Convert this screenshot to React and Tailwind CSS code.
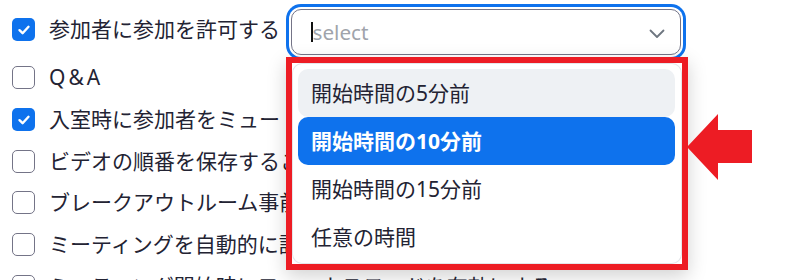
import React from "react";

const rows = [
  { label: "Q&A", checked: false, latin: true },
  { label: "入室時に参加者をミュートする", checked: true },
  { label: "ビデオの順番を保存することを許可する", checked: false },
  { label: "ブレークアウトルーム事前割り当て", checked: false },
  { label: "ミーティングを自動的に記録する", checked: false },
  { label: "ミーティング開始時にフォーカスモードを有効にする", checked: false },
];

function Box({ checked }) {
  if (checked) {
    return (
      <span className="flex h-[23px] w-[23px] shrink-0 items-center justify-center rounded-[5px] bg-[#0e72ed]">
        <svg width="14" height="14" viewBox="0 0 14 14" fill="none">
          <path d="M2.5 7.2 L5.6 10.2 L11.5 3.8" stroke="white" strokeWidth="2.4" strokeLinecap="round" strokeLinejoin="round" />
        </svg>
      </span>
    );
  }
  return <span className="h-[23px] w-[23px] shrink-0 rounded-[5px] border-[1.5px] border-[#747487] bg-white" />;
}

export default function App() {
  return (
    <div className="relative h-[280px] w-[787px] overflow-hidden bg-white font-['Noto_Sans','Noto_Sans_CJK_JP',sans-serif] text-[21px] text-[#232333]">
      <div className="flex flex-col pl-[12px] pt-[2px]">
        <div className="flex h-[55px] items-center">
          <Box checked />
          <span className="ml-[14px] w-[242px] whitespace-nowrap leading-none">参加者に参加を許可する</span>
          <div className="mt-[5px] flex h-[46px] w-[390px] items-center justify-between rounded-[10px] border border-[#747487] bg-white pl-[19px] pr-[15px] ring-[3px] ring-[#0e72ed] ring-offset-[2px]">
            <div className="flex items-center">
              <span className="h-[20px] w-[1.5px] bg-[#111]" />
              <span className="text-[20.7px] leading-none text-[#a0a4ab]">select</span>
            </div>
            <svg width="16" height="10" viewBox="0 0 16 10" fill="none" className="mt-[3px]">
              <path d="M1.5 1.5 L8 8 L14.5 1.5" stroke="#6e7680" strokeWidth="1.8" strokeLinecap="round" strokeLinejoin="round" />
            </svg>
          </div>
        </div>
        {rows.map((r) => (
          <div key={r.label} className="flex h-[41.7px] items-center">
            <Box checked={r.checked} />
            <span className={"ml-[14px] whitespace-nowrap leading-none" + (r.latin ? " tracking-[3px]" : "")}>{r.label}</span>
          </div>
        ))}
      </div>

      <div className="absolute left-[286px] top-[57px] z-10 h-[213px] w-[402px] border-[6px] border-[#ed1c24] bg-white shadow-[0_6px_18px_rgba(0,0,0,0.18)]">
        <div className="flex h-full w-full flex-col rounded-[10px] bg-white p-[6px] pr-[7px] shadow-[inset_0_0_0_1px_#e4e6ea]">
          <div className="flex h-[48px] shrink-0 items-center rounded-[10px] bg-[#eef1f4] px-[13px] leading-none">開始時間の5分前</div>
          <div className="flex h-[48px] shrink-0 items-center rounded-[10px] bg-[#0e72ed] px-[13px] font-bold leading-none text-white">開始時間の10分前</div>
          <div className="flex h-[48px] shrink-0 items-center rounded-[10px] px-[13px] leading-none">開始時間の15分前</div>
          <div className="flex h-[48px] shrink-0 items-center rounded-[10px] px-[13px] leading-none">任意の時間</div>
        </div>
      </div>

      <svg className="absolute left-[684px] top-[112px] z-20" width="72" height="72" viewBox="684 112 72 72">
        <polygon points="687,147 718,114 718,130 752,130 752,163 718,163 718,180" fill="#ed1c24" />
      </svg>
    </div>
  );
}
